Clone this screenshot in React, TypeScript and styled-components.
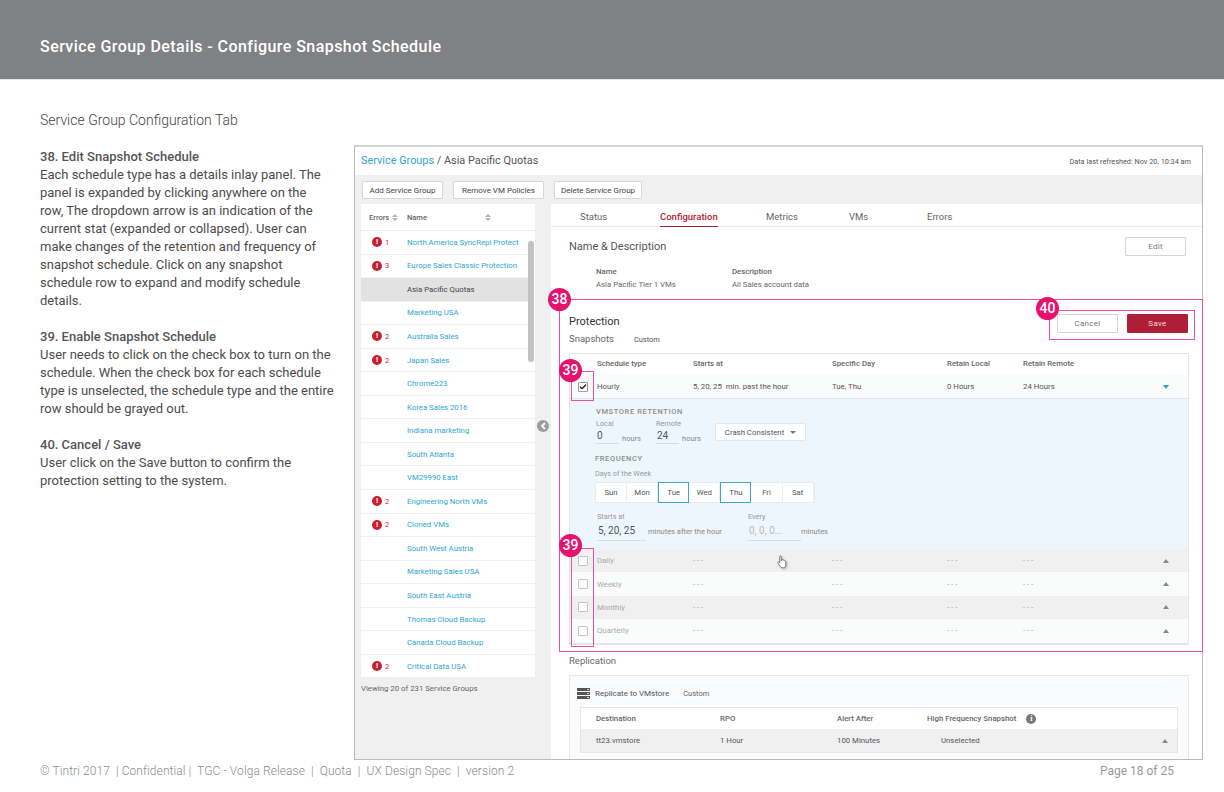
import React from "react";
import styled, { createGlobalStyle } from "styled-components";
import { Check } from "lucide-react";

const GlobalStyle = createGlobalStyle`
  html, body { margin: 0; padding: 0; background: #fff; }
  body { font-family: Roboto, "Liberation Sans", sans-serif; width: 1224px; height: 792px; overflow: hidden; }
  * { box-sizing: border-box; }
`;

const Page = styled.div`
  width: 1224px;
  height: 792px;
  display: flex;
  flex-direction: column;
  overflow: hidden;
`;

const Header = styled.header`
  height: 80px;
  flex: none;
  display: flex;
  align-items: center;
  padding: 14px 0 0 40px;
  background: #808184;
  border-bottom: 1px solid #e4e5e6;
  color: #fff;
  font-size: 16px;
  font-weight: 500;
  letter-spacing: 0.44px;
`;

const Content = styled.div`
  flex: none;
  height: 680px;
  display: grid;
  grid-template-columns: 314px 849px;
  padding-left: 40px;
`;

const Notes = styled.section`
  padding-top: 32px;
  color: #555;
`;

const TabTitle = styled.h2`
  margin: 0 0 20px;
  font-size: 14px;
  font-weight: 300;
  line-height: 16px;
  color: #444;
`;

const Note = styled.div`
  margin-bottom: 18px;
  width: 294px;
  font-size: 13px;
  line-height: 18px;
  color: #4c4c4c;
  p { margin: 0; }
  strong { display: block; font-weight: 500; color: #555; }
`;

const Frame = styled.div`
  position: relative;
  margin-top: 65px;
  height: 615px;
  border: 1px solid #b9b9b9;
  border-top: 2px solid #d4d4d4;
  background: #f0f0f0;
  display: flex;
  flex-direction: column;
`;

const TopBar = styled.div`
  height: 28px;
  flex: none;
  background: #fff;
  display: flex;
  align-items: center;
  justify-content: space-between;
  padding: 0 11px 2px 6px;
`;

const Crumbs = styled.div`
  font-size: 10.9px;
  color: #555;
  a { color: #2ea6d3; }
`;

const Refreshed = styled.div`
  margin-top: 2px;
  font-size: 7.3px;
  color: #555;
`;

const Toolbar = styled.div`
  height: 29px;
  flex: none;
  display: flex;
  align-items: center;
  gap: 10px;
  padding: 1px 0 0 7px;
`;

const ToolButton = styled.button<{ $w: number }>`
  width: ${(p) => p.$w}px;
  height: 18px;
  padding: 0;
  background: #fff;
  border: 1px solid #d8d8d8;
  border-radius: 1px;
  font: 400 8px Roboto, sans-serif;
  color: #444;
`;

const Body = styled.div`
  flex: 1;
  min-height: 0;
  display: grid;
  grid-template-columns: 196px 1fr;
  overflow: hidden;
`;

const ListColumn = styled.div`
  position: relative;
  padding-left: 6px;
`;

const ListPanel = styled.div`
  width: 174px;
  background: #fff;
  position: relative;
`;

const ListHead = styled.div`
  height: 27px;
  display: grid;
  grid-template-columns: 38px 1fr;
  align-items: center;
  padding: 1px 0 0 8px;
  font-size: 7.5px;
  font-weight: 500;
  color: #666;
  border-bottom: 1px solid #eee;
  span { display: flex; align-items: center; gap: 3px; }
`;

const SortIcon = styled.i<{ $ml?: number }>`
  display: inline-flex;
  flex-direction: column;
  gap: 1px;
  margin-left: ${(p) => p.$ml ?? 0}px;
  &::before, &::after { content: ""; border-left: 3px solid transparent; border-right: 3px solid transparent; }
  &::before { border-bottom: 3px solid #b5b5b5; }
  &::after { border-top: 3px solid #b5b5b5; }
`;

const ListRow = styled.div<{ $active?: boolean }>`
  height: 23.55px;
  display: grid;
  grid-template-columns: 38px 1fr;
  align-items: center;
  padding-left: 8px;
  margin-right: ${(p) => (p.$active ? 6 : 0)}px;
  font-size: 7.8px;
  color: ${(p) => (p.$active ? "#444" : "#2ea6d3")};
  background: ${(p) => (p.$active ? "#e2e2e2" : "#fff")};
  border-bottom: 1px solid #f1f1f1;
`;

const ErrorCell = styled.div`
  display: flex;
  align-items: center;
  gap: 3px;
  padding-left: 3px;
  color: #d0283a;
  font-size: 7.5px;
`;

const ErrorDot = styled.b`
  width: 10px;
  height: 10px;
  border-radius: 50%;
  background: #c8202f;
  color: #fff;
  font-size: 8px;
  line-height: 10px;
  text-align: center;
`;

const Scrollbar = styled.div`
  position: absolute;
  top: 37px;
  right: 1px;
  width: 6px;
  height: 121px;
  border-radius: 3px;
  background: #c2c2c2;
`;

const Viewing = styled.div`
  margin-top: 6px;
  font-size: 7.8px;
  color: #666;
`;

const CollapseDot = styled.div`
  position: absolute;
  top: 216px;
  right: 2px;
  width: 12px;
  height: 12px;
  border-radius: 50%;
  background: #9c9c9c;
  display: flex;
  align-items: center;
  justify-content: center;
`;

const Main = styled.div`
  background: #fff;
  overflow: hidden;
`;

const Tabs = styled.div`
  height: 23px;
  display: flex;
  border-bottom: 1px solid #eaeaea;
  padding-left: 29px;
`;

const Tab = styled.div<{ $w: number; $active?: boolean }>`
  width: ${(p) => p.$w}px;
  font-size: 9.5px;
  line-height: 25px;
  span {
    display: inline-block;
    height: 23px;
    color: ${(p) => (p.$active ? "#b01e36" : "#666")};
    font-weight: ${(p) => (p.$active ? 500 : 400)};
    border-bottom: ${(p) => (p.$active ? "1px solid #b01e36" : "none")};
  }
`;

const NameSection = styled.div`
  height: 73px;
  padding: 10px 16px 0 18px;
`;

const SectionHead = styled.div`
  display: flex;
  justify-content: space-between;
  align-items: center;
  font-size: 11px;
  color: #555;
`;

const PlainButton = styled.button`
  width: 61px;
  height: 19px;
  padding: 0;
  background: #fff;
  border: 1px solid #d5d5d5;
  border-radius: 1px;
  font: 400 8px Roboto, sans-serif;
  letter-spacing: 0.3px;
  color: #777;
`;

const SaveButton = styled(PlainButton)`
  background: #ae1f37;
  border-color: #ae1f37;
  color: #f2d8dc;
`;

const NameGrid = styled.div`
  display: grid;
  grid-template-columns: 136px 1fr;
  margin: 9px 0 0 27px;
  font-size: 7.8px;
  line-height: 13px;
  color: #666;
  b { display: block; font-weight: 500; color: #666; }
`;

const Protection = styled.div`
  height: 352px;
  padding: 14px 14px 0 18px;
`;

const ProtectionHead = styled.div`
  display: flex;
  justify-content: space-between;
  height: 39px;
`;

const ProtectionTitle = styled.div`
  padding-top: 1px;
  font-size: 11px;
  line-height: 14px;
  color: #333;
`;

const Subline = styled.div`
  display: flex;
  align-items: baseline;
  gap: 20px;
  margin-top: 4px;
  font-size: 9.5px;
  color: #666;
  small { font-size: 7.4px; color: #555; }
`;

const SaveCancel = styled.div`
  display: flex;
  gap: 9px;
`;

const ScheduleTable = styled.div`
  border: 1px solid #e6e6e6;
  border-bottom-width: 2px;
  width: 620px;
  background: #fff;
`;

const scheduleCols = "27px 96px 139px 115px 76px 140px 1fr";

const TableHead = styled.div`
  height: 21px;
  padding-bottom: 3px;
  display: grid;
  grid-template-columns: ${scheduleCols};
  align-items: center;
  font-size: 7.8px;
  font-weight: 500;
  color: #666;
`;

const ScheduleRow = styled.div<{ $off?: boolean; $tint?: boolean }>`
  height: ${(p) => (p.$off ? 23.4 : 23)}px;
  display: grid;
  grid-template-columns: ${scheduleCols};
  align-items: center;
  font-size: 7.8px;
  color: ${(p) => (p.$off ? "#aaa" : "#555")};
  background: ${(p) => (p.$tint ? "#f0f0f0" : "#fafbfb")};
`;

const CheckBox = styled.div<{ $on?: boolean }>`
  justify-self: start;
  margin-left: 8px;
  width: 10px;
  height: 10px;
  border: 1px solid ${(p) => (p.$on ? "#999" : "#c4c4c4")};
  border-radius: 1px;
  background: #fff;
  display: flex;
  align-items: center;
  justify-content: center;
`;

const ArrowUp = styled.i`
  width: 0;
  height: 0;
  border-left: 3.5px solid transparent;
  border-right: 3.5px solid transparent;
  border-bottom: 4px solid #888;
`;

const ArrowDown = styled.i`
  width: 0;
  height: 0;
  border-left: 3.5px solid transparent;
  border-right: 3.5px solid transparent;
  border-top: 4px solid #2a9fd0;
`;

const Inlay = styled.div`
  height: 151px;
  background: #eef6fd;
  border-top: 1px solid #dfe5ea;
  padding: 8px 0 0 26px;
  color: #888;
`;

const InlayTitle = styled.div`
  font-size: 7.5px;
  font-weight: 500;
  letter-spacing: 0.6px;
  color: #8c8c8c;
  line-height: 10px;
`;

const FrequencyTitle = styled(InlayTitle)`
  margin: 9px 0 0 -1px;
`;

const Fields = styled.div`
  display: flex;
  align-items: flex-start;
  gap: 15px;
  margin-top: 2px;
`;

const Field = styled.div<{ $w: number; $lh?: number; $muted?: boolean }>`
  width: ${(p) => p.$w}px;
  flex: none;
  small { display: block; font-size: 7.3px; line-height: 10px; color: #999; }
  em {
    display: block;
    font-style: normal;
    font-size: 10px;
    line-height: ${(p) => p.$lh ?? 14}px;
    padding-left: 1px;
    color: ${(p) => (p.$muted ? "#bbb" : "#555")};
    border-bottom: 1px solid #d8dde2;
  }
`;

const HoursUnit = styled.span`
  width: 19px;
  margin: 14px 0 0 -12px;
  font-size: 7.5px;
  line-height: 12px;
  color: #888;
`;

const AfterUnit = styled.span`
  width: 100px;
  margin: 14px 0 0 2px;
  font-size: 7.5px;
  line-height: 12px;
  color: #888;
`;

const EveryUnit = styled.span`
  margin-top: 14px;
  font-size: 7.5px;
  line-height: 12px;
  color: #888;
`;

const Dropdown = styled.div`
  width: 91px;
  height: 18px;
  margin: 4px 0 0 -1px;
  background: #fff;
  border: 1px solid #e3e8ec;
  display: flex;
  align-items: center;
  justify-content: center;
  gap: 6px;
  font-size: 7.8px;
  color: #555;
`;

const SmallCaret = styled.i`
  width: 0;
  height: 0;
  border-left: 3px solid transparent;
  border-right: 3px solid transparent;
  border-top: 3px solid #777;
`;

const DaysLabel = styled.div`
  margin: 5px 0 3px -1px;
  font-size: 7.3px;
  line-height: 10px;
  color: #999;
`;

const Days = styled.div`
  display: flex;
  width: fit-content;
  margin-left: -1px;
  background: #fff;
  border: 1px solid #e6ebef;
`;

const Day = styled.div<{ $on?: boolean }>`
  width: 31.1px;
  height: 21px;
  margin: -1px 0;
  display: flex;
  align-items: center;
  justify-content: center;
  font-size: 7.8px;
  color: #555;
  border: ${(p) => (p.$on ? "1.5px solid #3ea5cc" : "none")};
  border-right: ${(p) => (p.$on ? "1.5px solid #3ea5cc" : "1px solid #eee")};
`;

const FrequencyRow = styled.div`
  display: flex;
  align-items: flex-start;
  margin-top: 9px;
  padding-left: 1px;
`;

const Replication = styled.div`
  padding: 2px 0 0 18px;
`;

const ReplicationTitle = styled.div`
  font-size: 9.5px;
  line-height: 14px;
  color: #666;
`;

const ReplicationCard = styled.div`
  margin-top: 7px;
  width: 620px;
  height: 100px;
  border: 1px solid #e8e8e8;
  background: #fafbfc;
  padding: 0 0 0 10px;
`;

const ReplicateHead = styled.div`
  height: 31px;
  padding-top: 3px;
  display: flex;
  align-items: center;
  gap: 5px;
  font-size: 8px;
  color: #555;
  svg { margin-left: -3px; }
  small { margin-left: 9px; font-size: 7.5px; color: #666; }
`;

const DestTable = styled.div`
  width: 598px;
  background: #fff;
  border: 1px solid #e6e6e6;
`;

const destCols = "15px 124px 117px 90px 1fr 15px";

const DestHead = styled.div`
  height: 21px;
  display: grid;
  grid-template-columns: ${destCols};
  align-items: center;
  font-size: 7.8px;
  font-weight: 500;
  color: #666;
`;

const DestRow = styled.div`
  height: 23px;
  display: grid;
  grid-template-columns: ${destCols};
  align-items: center;
  font-size: 7.8px;
  color: #555;
  background: #f0f0f0;
`;

const Unselected = styled.span`
  padding-left: 14px;
`;

const InfoDot = styled.b`
  display: inline-block;
  width: 10px;
  height: 10px;
  margin-left: 8px;
  border-radius: 50%;
  background: #777;
  color: #fff;
  font: 700 8px/10px "Liberation Serif", serif;
  text-align: center;
`;

const Callout = styled.div<{ $x: number; $y: number; $w: number; $h: number }>`
  position: absolute;
  left: ${(p) => p.$x}px;
  top: ${(p) => p.$y}px;
  width: ${(p) => p.$w}px;
  height: ${(p) => p.$h}px;
  border: 1px solid #ee4fa0;
  pointer-events: none;
`;

const Badge = styled.div<{ $x: number; $y: number }>`
  position: absolute;
  left: ${(p) => p.$x}px;
  top: ${(p) => p.$y}px;
  width: 23px;
  height: 23px;
  border-radius: 50%;
  background: #e5126e;
  color: #fff;
  font-size: 14px;
  font-weight: 500;
  line-height: 23px;
  text-align: center;
`;

const HandCursor = styled.svg`
  position: absolute;
  left: 422px;
  top: 408px;
  filter: drop-shadow(1px 1px 1px rgba(0, 0, 0, 0.3));
`;

const Footer = styled.footer`
  flex: none;
  height: 32px;
  display: flex;
  justify-content: space-between;
  padding: 3px 50px 0 40px;
  font-size: 12px;
  line-height: 16px;
  font-weight: 300;
  letter-spacing: 0.08px;
  color: #8c8c8c;
  span:last-child { font-weight: 400; letter-spacing: 0; color: #999; }
`;

const groups: [string, number?][] = [
  ["North America SyncRepl Protect", 1],
  ["Europe Sales Classic Protection", 3],
  ["Asia Pacific Quotas"],
  ["Marketing USA"],
  ["Australia Sales", 2],
  ["Japan Sales", 2],
  ["Chrome223"],
  ["Korea Sales 2016"],
  ["Indiana marketing"],
  ["South Atlanta"],
  ["VM29990 East"],
  ["Engineering North VMs", 2],
  ["Cloned VMs", 2],
  ["South West Austria"],
  ["Marketing Sales USA"],
  ["South East Austria"],
  ["Thomas Cloud Backup"],
  ["Canada Cloud Backup"],
  ["Critical Data USA", 2],
];

const days = ["Sun", "Mon", "Tue", "Wed", "Thu", "Fri", "Sat"];
const offRows = ["Daily", "Weekly", "Monthly", "Quarterly"];

export default function App() {
  return (
    <Page>
      <GlobalStyle />
      <Header>Service Group Details - Configure Snapshot Schedule</Header>
      <Content>
        <Notes>
          <TabTitle>Service Group Configuration Tab</TabTitle>
          <Note>
            <strong>38. Edit Snapshot Schedule</strong>
            <p>
              Each schedule type has a details inlay panel. The panel is expanded by clicking anywhere on the
              <br />
              row, The dropdown arrow is an indication of the current stat (expanded or collapsed). User can make
              changes of the retention and frequency of snapshot schedule. Click on any snapshot schedule row to expand
              and modify schedule details.
            </p>
          </Note>
          <Note>
            <strong>39. Enable Snapshot Schedule</strong>
            <p>
              User needs to click on the check box to turn on the schedule. When the check box for each schedule type is
              unselected, the schedule type and the entire row should be grayed out.
            </p>
          </Note>
          <Note>
            <strong>40. Cancel / Save</strong>
            <p>User click on the Save button to confirm the protection setting to the system.</p>
          </Note>
        </Notes>
        <Frame>
          <TopBar>
            <Crumbs>
              <a>Service Groups</a> / Asia Pacific Quotas
            </Crumbs>
            <Refreshed>Data last refreshed: Nov 20, 10:34 am</Refreshed>
          </TopBar>
          <Toolbar>
            <ToolButton $w={81}>Add Service Group</ToolButton>
            <ToolButton $w={91}>Remove VM Policies</ToolButton>
            <ToolButton $w={88}>Delete Service Group</ToolButton>
          </Toolbar>
          <Body>
            <ListColumn>
              <ListPanel>
                <ListHead>
                  <span>
                    Errors <SortIcon />
                  </span>
                  <span>
                    Name <SortIcon $ml={55} />
                  </span>
                </ListHead>
                {groups.map(([name, count]) => (
                  <ListRow key={name} $active={name === "Asia Pacific Quotas"}>
                    <ErrorCell>
                      {count && (
                        <>
                          <ErrorDot>!</ErrorDot>
                          {count}
                        </>
                      )}
                    </ErrorCell>
                    {name}
                  </ListRow>
                ))}
                <Scrollbar />
              </ListPanel>
              <Viewing>Viewing 20 of 231 Service Groups</Viewing>
              <CollapseDot>
                <svg width="7" height="8" viewBox="0 0 7 8">
                  <path d="M5 1 2 4l3 3" fill="none" stroke="#fff" strokeWidth="2" />
                </svg>
              </CollapseDot>
            </ListColumn>
            <Main>
              <Tabs>
                <Tab $w={80}>
                  <span>Status</span>
                </Tab>
                <Tab $w={106} $active>
                  <span>Configuration</span>
                </Tab>
                <Tab $w={83}>
                  <span>Metrics</span>
                </Tab>
                <Tab $w={78}>
                  <span>VMs</span>
                </Tab>
                <Tab $w={60}>
                  <span>Errors</span>
                </Tab>
              </Tabs>
              <NameSection>
                <SectionHead>
                  Name &amp; Description
                  <PlainButton>Edit</PlainButton>
                </SectionHead>
                <NameGrid>
                  <div>
                    <b>Name</b>Asia Pacific Tier 1 VMs
                  </div>
                  <div>
                    <b>Description</b>All Sales account data
                  </div>
                </NameGrid>
              </NameSection>
              <Protection>
                <ProtectionHead>
                  <div>
                    <ProtectionTitle>Protection</ProtectionTitle>
                    <Subline>
                      Snapshots <small>Custom</small>
                    </Subline>
                  </div>
                  <SaveCancel>
                    <PlainButton>Cancel</PlainButton>
                    <SaveButton>Save</SaveButton>
                  </SaveCancel>
                </ProtectionHead>
                <ScheduleTable>
                  <TableHead>
                    <span />
                    <span>Schedule type</span>
                    <span>Starts at</span>
                    <span>Specific Day</span>
                    <span>Retain Local</span>
                    <span>Retain Remote</span>
                  </TableHead>
                  <ScheduleRow>
                    <CheckBox $on>
                      <Check size={8} strokeWidth={4} color="#222" />
                    </CheckBox>
                    <span>Hourly</span>
                    <span>5, 20, 25&nbsp; min. past the hour</span>
                    <span>Tue, Thu</span>
                    <span>0 Hours</span>
                    <span>24 Hours</span>
                    <ArrowDown />
                  </ScheduleRow>
                  <Inlay>
                    <InlayTitle>VMSTORE RETENTION</InlayTitle>
                    <Fields>
                      <Field $w={23}>
                        <small>Local</small>
                        <em>0</em>
                      </Field>
                      <HoursUnit>hours</HoursUnit>
                      <Field $w={23}>
                        <small>Remote</small>
                        <em>24</em>
                      </Field>
                      <HoursUnit>hours</HoursUnit>
                      <Dropdown>
                        Crash Consistent <SmallCaret />
                      </Dropdown>
                    </Fields>
                    <FrequencyTitle>FREQUENCY</FrequencyTitle>
                    <DaysLabel>Days of the Week</DaysLabel>
                    <Days>
                      {days.map((d) => (
                        <Day key={d} $on={d === "Tue" || d === "Thu"}>
                          {d}
                        </Day>
                      ))}
                    </Days>
                    <FrequencyRow>
                      <Field $w={49} $lh={18}>
                        <small>Starts at</small>
                        <em>5, 20, 25</em>
                      </Field>
                      <AfterUnit>minutes after the hour</AfterUnit>
                      <Field $w={53} $lh={18} $muted>
                        <small>Every</small>
                        <em>0, 0, 0...</em>
                      </Field>
                      <EveryUnit>minutes</EveryUnit>
                    </FrequencyRow>
                  </Inlay>
                  {offRows.map((r, i) => (
                    <ScheduleRow key={r} $off $tint={i % 2 === 0}>
                      <CheckBox />
                      <span>{r}</span>
                      <span>- - -</span>
                      <span>- - -</span>
                      <span>- - -</span>
                      <span>- - -</span>
                      <ArrowUp />
                    </ScheduleRow>
                  ))}
                </ScheduleTable>
              </Protection>
              <Replication>
                <ReplicationTitle>Replication</ReplicationTitle>
                <ReplicationCard>
                  <ReplicateHead>
                    <svg width="13" height="11" viewBox="0 0 13 11">
                      <path d="M0 0h13v3H0zM0 4h13v3H0zM0 8h13v3H0z" fill="#555" />
                      <path d="M10 1h2v1h-2zM10 5h2v1h-2zM10 9h2v1h-2z" fill="#ddd" />
                    </svg>
                    Replicate to VMstore <small>Custom</small>
                  </ReplicateHead>
                  <DestTable>
                    <DestHead>
                      <span />
                      <span>Destination</span>
                      <span>RPO</span>
                      <span>Alert After</span>
                      <span>
                        High Frequency Snapshot <InfoDot>i</InfoDot>
                      </span>
                    </DestHead>
                    <DestRow>
                      <span />
                      <span>tt23.vmstore</span>
                      <span>1 Hour</span>
                      <span>100 Minutes</span>
                      <Unselected>Unselected</Unselected>
                      <ArrowUp />
                    </DestRow>
                  </DestTable>
                </ReplicationCard>
              </Replication>
            </Main>
          </Body>
          <Callout $x={204} $y={152} $w={644} $h={353} />
          <Callout $x={694} $y={163} $w={146} $h={30} />
          <Callout $x={216} $y={224} $w={23} $h={30} />
          <Callout $x={216} $y={401} $w={23} $h={99} />
          <Badge $x={193} $y={141}>38</Badge>
          <Badge $x={204} $y={212}>39</Badge>
          <Badge $x={204} $y={387}>39</Badge>
          <Badge $x={681} $y={150}>40</Badge>
          <HandCursor width="11" height="14" viewBox="0 0 12 15">
            <path
              d="M3 1.5c0-1 1.6-1 1.6 0V6l.4-1c.9-.4 1.5 0 1.5.6.8-.4 1.4 0 1.5.6.8-.3 1.5.1 1.5 1V11c0 1.5-1 2.7-2.5 2.7H6c-1 0-1.7-.5-2.2-1.2L1 8.6c-.5-.9.6-1.6 1.3-.9l.7.8z"
              fill="#fff"
              stroke="#666"
              strokeWidth="0.9"
            />
          </HandCursor>
        </Frame>
      </Content>
      <Footer>
        <span>© Tintri 2017&nbsp; | Confidential |&nbsp; TGC - Volga Release&nbsp; |&nbsp; Quota&nbsp; |&nbsp; UX Design Spec&nbsp; |&nbsp; version 2</span>
        <span>Page 18 of 25</span>
      </Footer>
    </Page>
  );
}
